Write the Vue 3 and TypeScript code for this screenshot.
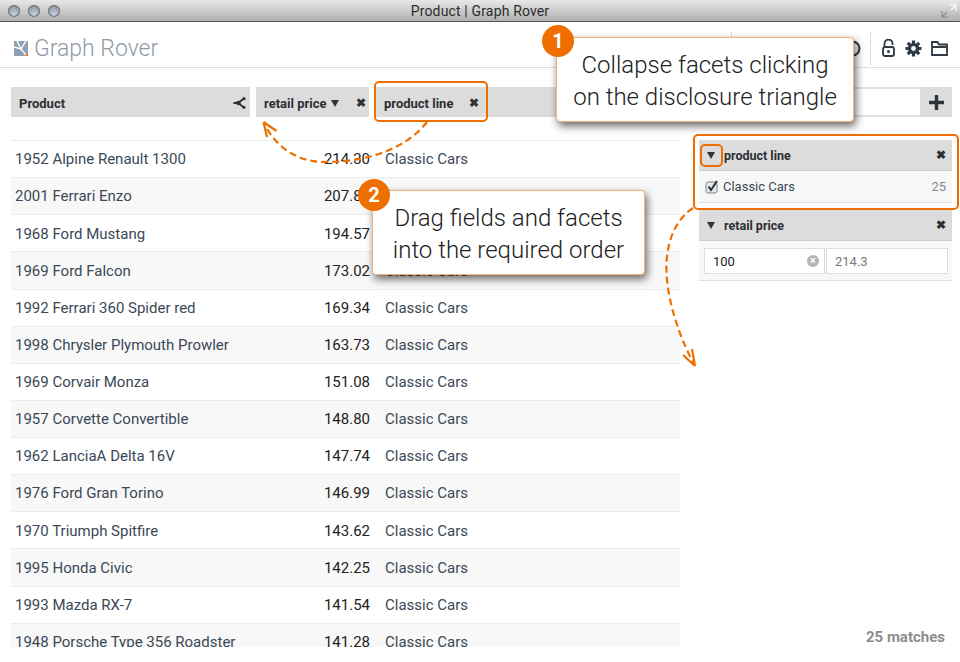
<script setup lang="ts">
const rows: [string, string][] = [
  ['1952 Alpine Renault 1300', '214.30'],
  ['2001 Ferrari Enzo', '207.80'],
  ['1968 Ford Mustang', '194.57'],
  ['1969 Ford Falcon', '173.02'],
  ['1992 Ferrari 360 Spider red', '169.34'],
  ['1998 Chrysler Plymouth Prowler', '163.73'],
  ['1969 Corvair Monza', '151.08'],
  ['1957 Corvette Convertible', '148.80'],
  ['1962 LanciaA Delta 16V', '147.74'],
  ['1976 Ford Gran Torino', '146.99'],
  ['1970 Triumph Spitfire', '143.62'],
  ['1995 Honda Civic', '142.25'],
  ['1993 Mazda RX-7', '141.54'],
  ['1948 Porsche Type 356 Roadster', '141.28'],
]
</script>

<template>
  <div class="win">
    <div class="titlebar">
      <div class="lights"><i></i><i></i><i></i></div>
      <div class="title">Product | Graph Rover</div>
      <svg class="fs" width="16" height="14" viewBox="0 0 16 14">
        <path d="M9 1h6v6M15 1l-5 5" fill="none" stroke="#fff" stroke-width="1.2" />
        <path d="M7 13H1V7M1 13l5-5" fill="none" stroke="#8a8a8a" stroke-width="1.2" />
      </svg>
    </div>

    <header class="top">
      <div class="brand">
        <svg width="14" height="15" viewBox="0 0 14 15">
          <rect width="14" height="15" fill="#8fa0b0" />
          <path d="M3 0 L7 8 M12 0 L7 8 M0 6 L7 8 L13 15" fill="none" stroke="#fff" stroke-width="1.4" />
          <rect x="12" y="13" width="2" height="2" fill="#ee6f00" />
        </svg>
        <span>Graph Rover</span>
      </div>
      <div class="tools">
        <span class="sep sep-far"></span>
        <svg class="tool-clock" width="17" height="17" viewBox="0 0 16 16">
          <circle cx="8" cy="8" r="6.5" fill="none" stroke="#3a3f45" stroke-width="2" />
          <path d="M8 4v4.5l-2 2" fill="none" stroke="#3a3f45" stroke-width="1.8" />
        </svg>
        <span class="sep"></span>
        <svg class="ic-lock" width="13" height="18" viewBox="0 0 13 18">
          <path d="M2.5 8V4.5a4 4 0 0 1 8 0V6" fill="none" stroke="#2f3a45" stroke-width="1.8" />
          <rect x="1" y="8" width="11" height="9" rx="2" fill="none" stroke="#2f3a45" stroke-width="1.8" />
          <circle cx="6.5" cy="12.5" r="1.5" fill="#2f3a45" />
        </svg>
        <svg class="ic-gear" width="17" height="17" viewBox="0 0 17 17">
          <path d="M8.5 0.5v16M0.5 8.5h16M2.8 2.8l11.4 11.4M14.2 2.8 2.8 14.2" stroke="#2f3a45" stroke-width="3.2" />
          <circle cx="8.5" cy="8.5" r="5.6" fill="#2f3a45" />
          <circle cx="8.5" cy="8.5" r="2.4" fill="#fff" />
        </svg>
        <svg class="ic-folder" width="17" height="15" viewBox="0 0 17 15">
          <path d="M1 14V1h5.5l1.5 2.5h8V14zM1 6h15" fill="none" stroke="#2f3a45" stroke-width="1.8" />
        </svg>
      </div>
    </header>

    <div class="content">
      <main class="table-area">
        <div class="cols">
          <div class="col col-product">
            <span>Product</span>
            <svg class="ic-tree" width="13" height="12" viewBox="0 0 13 12">
              <path d="M0.500 6h5M11 1.500 5 6l6 4.500" fill="none" stroke="#2b3138" stroke-width="1.8" />
              <circle cx="5.500" cy="6" r="2.300" fill="#2b3138" />
              <circle cx="11" cy="1.700" r="1.600" fill="#2b3a48" />
              <circle cx="11" cy="10.300" r="1.600" fill="#2b3a48" />
            </svg>
          </div>
          <div class="col col-price"><span class="lbl">retail price<i class="tri"></i></span><b>✖</b></div>
          <div class="col col-line"><span>product line</span><b>✖</b></div>
          <div class="col col-rest"></div>
        </div>
        <div class="rows">
          <div v-for="r in rows" :key="r[0]" class="row">
            <span class="c-name">{{ r[0] }}</span>
            <span class="c-price">{{ r[1] }}</span>
            <span class="c-line">Classic Cars</span>
          </div>
        </div>
      </main>

      <aside class="side">
        <div class="search">
          <div class="search-input"></div>
          <div class="plus">
            <svg width="15" height="15" viewBox="0 0 15 15"><path d="M7.5 0v15M0 7.5h15" stroke="#2f333a" stroke-width="3.4" /></svg>
          </div>
        </div>
        <section class="facet">
          <div class="facet-h"><i class="tri"></i><span>product line</span><b>✖</b></div>
          <div class="facet-b check-row">
            <svg width="14" height="14" viewBox="0 0 14 14">
              <rect x="1" y="2" width="11" height="11" rx="2" fill="#e4e6e9" stroke="#7d8690" />
              <path d="M3.5 6.5 6 10l6-9" fill="none" stroke="#2b3138" stroke-width="2" />
            </svg>
            <span class="opt">Classic Cars</span>
            <span class="cnt">25</span>
          </div>
        </section>
        <section class="facet">
          <div class="facet-h"><i class="tri"></i><span>retail price</span><b>✖</b></div>
          <div class="facet-b range">
            <div class="inp inp-a"><span>100</span><i>×</i></div>
            <div class="inp inp-b">214.3</div>
          </div>
        </section>
        <div class="matches">25 matches</div>
      </aside>
    </div>

    <!-- annotation layer -->
    <div class="ring ring-col"></div>
    <div class="ring ring-facet"></div>
    <div class="ring ring-tri"></div>
    <svg class="arrows" width="960" height="662" viewBox="0 0 960 662">
      <g fill="none" stroke="#ee6f00" stroke-width="2.2">
        <path d="M427 122 C405 150 365 162 325 162 C295 162 275 145 265 125" stroke-dasharray="7 4" />
        <path d="M263.500 122l3.500 15M263.500 122l13 9" />
        <path d="M693 208 C672 222 664 250 667 280 C670 310 682 342 694 364" stroke-dasharray="7 4" />
        <path d="M695 366l-12-11M695 366l-3-17" />
      </g>
    </svg>

    <div class="note note-1">Collapse facets clicking<br />on the disclosure triangle</div>
    <div class="badge badge-1">1</div>
    <div class="note note-2">Drag fields and facets<br />into the required order</div>
    <div class="badge badge-2">2</div>
  </div>
</template>

<style>
html, body { margin: 0; background: #fff; overflow: hidden; }
</style>

<style scoped>
.win { position: relative; width: 960px; height: 662px; overflow: hidden; background: #fff; font-family: Roboto, "Liberation Sans", sans-serif; color: #2f3e4c; }
.titlebar { height: 21px; position: relative; display: flex; align-items: center; justify-content: center; background: linear-gradient(#e8e8e8, #b0b0b0); border-bottom: 1px solid #555; }
.lights { position: absolute; left: 8px; top: 5px; display: flex; gap: 8px; }
.lights i { width: 12px; height: 12px; border-radius: 50%; background: radial-gradient(circle at 50% 75%, #c6d0da, #77818c); box-shadow: inset 0 0 0 1px #6a727b; }
.title { font-size: 14px; letter-spacing: .15px; color: #2c2c2c; }
.fs { position: absolute; right: 3px; top: 4px; }
.top { height: 38px; padding: 7px 12px 0 14px; border-bottom: 1px solid #dfdfdf; display: flex; justify-content: space-between; align-items: center; }
.brand { display: flex; align-items: center; gap: 6px; font-size: 23px; font-weight: 300; color: #8f9aa5; }
.tools { display: flex; align-items: center; }
.sep { height: 33px; border-left: 1px dotted #bbb; }
.sep-far { margin-right: 112px; }
.tool-clock { margin: 0 9px 0 0; }
.ic-lock { margin-left: 11px; }
.ic-gear { margin-left: 10px; }
.ic-folder { margin-left: 9px; }
.content { display: flex; padding: 19px 8px 0 11px; gap: 19px; height: 575px; box-sizing: border-box; }
.table-area { width: 669px; flex: none; }
.cols { display: flex; gap: 6px; height: 30px; margin-bottom: 23px; font-size: 13px; font-weight: 700; color: #2e2e33; }
.col { background: #dcdcdc; display: flex; align-items: center; justify-content: space-between; box-sizing: border-box; padding: 2px 6px 0 8px; }
.col b { font-size: 12px; color: #333; }
.col-product { width: 239px; padding-right: 4px; }
.col-price { width: 113px; padding-right: 3px; }
.lbl { display: flex; align-items: center; }
.col-line { width: 110px; margin-left: 1px; padding-right: 7px; }
.col-rest { flex: 1; margin-left: -4px; }
.tri { display: block; width: 0; height: 0; border-left: 4.5px solid transparent; border-right: 4.5px solid transparent; border-top: 7px solid #333; }
.lbl .tri { margin-left: 5px; }
.rows { height: 507px; overflow: hidden; }
.row { height: 36.14px; box-sizing: content-box; border-top: 1px solid #ececec; display: flex; align-items: center; font-size: 15px; color: #3a4856; }
.row span { position: relative; top: 0.3px; }
.row:nth-child(even) { background: #f8f8f8; }
.c-name { width: 294px; padding-left: 4px; box-sizing: border-box; }
.c-price { width: 65px; text-align: right; color: #222; }
.c-line { margin-left: 15px; }
.side { width: 253px; flex: none; position: relative; }
.search { height: 30px; display: flex; margin-bottom: 23px; }
.search-input { flex: 1; border: 2px solid #e2e2e2; border-width: 2px 0; background: #fff; }
.plus { width: 32px; background: #dcdcdc; display: flex; align-items: center; justify-content: center; }
.facet-h { height: 30px; background: #dcdcdc; border-bottom: 1px solid #cfcfcf; display: flex; align-items: center; padding: 0 6px 0 8px; font-size: 12.5px; font-weight: 700; color: #2e2e33; }
.facet-h .tri { margin-right: 9px; }
.facet-h span { flex: 1; }
.facet-h b { font-size: 12px; }
.facet-b { background: #f7f7f7; border-bottom: 1px solid #dedede; }
.check-row { height: 31px; display: flex; align-items: center; padding: 0 6px; gap: 4px; font-size: 13px; margin-bottom: 7px; }
.opt { flex: 1; color: #3a4856; }
.cnt { color: #888; }
.range { height: 40px; display: flex; gap: 1px; padding: 7px 4px 7px 5px; box-sizing: border-box; font-size: 13px; }
.inp { border: 1px solid #ddd; background: #fff; height: 26px; box-sizing: border-box; display: flex; align-items: center; padding: 0 8px; }
.inp-a { width: 121px; justify-content: space-between; color: #222; padding-right: 5px; }
.inp-a i { width: 12px; height: 12px; border-radius: 50%; background: #b5b5b5; color: #fff; font: 700 11px/12px Roboto, sans-serif; text-align: center; }
.inp-b { flex: 1; color: #777; }
.matches { position: absolute; right: 7px; top: 541px; font-size: 15px; font-weight: 700; color: #8c8c8c; }
.ring { position: absolute; border: 2px solid #ee6f00; border-radius: 5px; box-sizing: border-box; }
.ring-col { left: 374px; top: 81px; width: 114px; height: 41px; }
.ring-facet { left: 693px; top: 134px; width: 266px; height: 76px; }
.ring-tri { left: 700px; top: 144px; width: 23px; height: 23px; }
.arrows { position: absolute; left: 0; top: 0; pointer-events: none; }
.note { position: absolute; box-sizing: border-box; background: #fff; border: 1px solid #f0b27a; border-radius: 4px; box-shadow: 2px 4px 8px rgba(0,0,0,.6); font-size: 24px; font-weight: 300; line-height: 32px; color: #222; text-align: center; }
.note-1 { left: 556px; top: 37px; width: 298px; height: 85px; padding-top: 11px; }
.note-2 { left: 372px; top: 190px; width: 273px; height: 85px; padding-top: 11px; }
.badge { position: absolute; width: 32px; height: 32px; border-radius: 50%; background: #ee6f00; color: #fff; font-size: 20px; font-weight: 700; line-height: 32px; text-align: center; }
.badge-1 { left: 542px; top: 25px; }
.badge-2 { left: 358px; top: 179px; }
</style>
